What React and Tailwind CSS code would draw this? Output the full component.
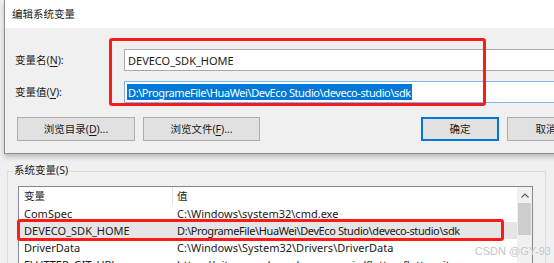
export default function App() {
  return (
    <div className="relative w-[554px] h-[263px] overflow-hidden bg-[#f0f0f0] font-['Noto_Sans','Noto_Sans_CJK_SC',sans-serif] text-[11px] leading-none text-[#1a1a1a]">
      {/* dialog */}
      <div className="relative z-10 ml-[4px] w-[600px] border-l border-b border-[#8f8f8f] shadow-[0_3px_5px_rgba(0,0,0,0.22)]">
        <div className="h-[28px] bg-white flex items-center pl-[7px] text-[10.5px] text-[#222]">编辑系统变量</div>
        <div className="relative bg-[#f0f0f0] pt-[21px] pb-[12px]">
          <div className="flex items-center h-[22px]">
            <div className="w-[119px] pl-[10px] text-[10.5px]">
              变量名(<span className="underline underline-offset-2">N</span>):
            </div>
            <div className="flex-1 h-full bg-white border border-[#a9a9a9] flex items-center pl-[3px]">DEVECO_SDK_HOME</div>
          </div>
          <div className="flex items-center h-[22px] mt-[10px]">
            <div className="w-[119px] pl-[10px] text-[10.5px]">
              变量值(<span className="underline underline-offset-2">V</span>):
            </div>
            <div className="flex-1 h-full bg-white border border-[#7eb4ea] flex items-center pl-[2px]">
              <span className="bg-[#0078d7] text-white h-[16px] flex items-center px-[1px] tracking-[-0.4px]">D:\ProgrameFile\HuaWei\DevEco Studio\deveco-studio\sdk</span>
            </div>
          </div>
          <div className="flex mt-[14px] text-[10.5px]">
            <div className="ml-[12px] w-[118px] h-[24px] bg-[#e1e1e1] border border-[#adadad] flex items-center justify-center">
              浏览目录(<span className="underline underline-offset-2">D</span>)...
            </div>
            <div className="ml-[8px] w-[117px] h-[24px] bg-[#e1e1e1] border border-[#adadad] flex items-center justify-center">
              浏览文件(<span className="underline underline-offset-2">F</span>)...
            </div>
            <div className="ml-[161px] w-[78px] h-[24px] bg-[#e1e1e1] border-2 border-[#0078d7] flex items-center justify-center">确定</div>
            <div className="ml-[8px] w-[78px] h-[24px] bg-[#e1e1e1] border border-[#adadad] flex items-center justify-center">取消</div>
          </div>
          {/* red annotation */}
          <div className="absolute left-[104px] top-[10px] w-[377px] h-[68px] border-[3px] border-[#ff1a1a] rounded-[3px]" />
        </div>
      </div>

      {/* group box */}
      <div className="relative ml-[7px] mt-[17px] w-[539px] h-[120px] border border-[#dcdcdc]">
        <div className="absolute left-[5px] top-[-7px] bg-[#f0f0f0] px-[1px] text-[10.5px]">系统变量(S)</div>
        <div className="relative ml-[10px] mt-[14px] w-[515px] h-[100px] bg-white border border-[#828790] flex">
          <div className="flex-1 flex flex-col">
            <div className="flex h-[18px] items-center">
              <div className="w-[154px] h-full pl-[5px] flex items-center border-r border-[#e5e5e5] text-[10.5px]">变量</div>
              <div className="pl-[4px] text-[10.5px]">值</div>
            </div>
            <div className="flex h-[17px] items-center">
              <div className="w-[154px] pl-[5px]">ComSpec</div>
              <div className="pl-[4px]">C:\Windows\system32\cmd.exe</div>
            </div>
            <div className="flex h-[17px] items-center bg-[#e5e5e5]">
              <div className="w-[154px] pl-[5px]">DEVECO_SDK_HOME</div>
              <div className="pl-[4px] tracking-[-0.4px]">D:\ProgrameFile\HuaWei\DevEco Studio\deveco-studio\sdk</div>
            </div>
            <div className="flex h-[17px] items-center">
              <div className="w-[154px] pl-[5px]">DriverData</div>
              <div className="pl-[4px]">C:\Windows\System32\Drivers\DriverData</div>
            </div>
            <div className="flex h-[17px] items-center">
              <div className="w-[154px] pl-[5px]">FLUTTER_GIT_URL</div>
              <div className="pl-[4px] whitespace-nowrap">https://gitee.com/openharmony-sig/flutter_flutter.git</div>
            </div>
          </div>
          <div className="w-[15px] bg-[#f0f0f0] flex flex-col items-center">
            <div className="h-[14px] flex items-center justify-center mt-[1px]">
              <svg width="8" height="5" viewBox="0 0 8 5">
                <path d="M0.5 4.5 L4 1 L7.5 4.5" fill="none" stroke="#606060" strokeWidth="1.2" />
              </svg>
            </div>
            <div className="mt-[1px] w-[13px] h-[32px] bg-[#cdcdcd]" />
          </div>
          {/* red annotation */}
          <div className="absolute left-[-2px] top-[32px] w-[487px] h-[22px] border-[3px] border-[#ff1a1a] rounded-[3px]" />
        </div>
      </div>

      {/* watermark */}
      <div className="absolute right-[3px] top-[246px] z-20 font-['Liberation_Sans',sans-serif] text-[11px] text-[#c4c4c4] [text-shadow:0_0_1px_rgba(255,255,255,0.9)]">
        CSDN @GY-93
      </div>
    </div>
  );
}
